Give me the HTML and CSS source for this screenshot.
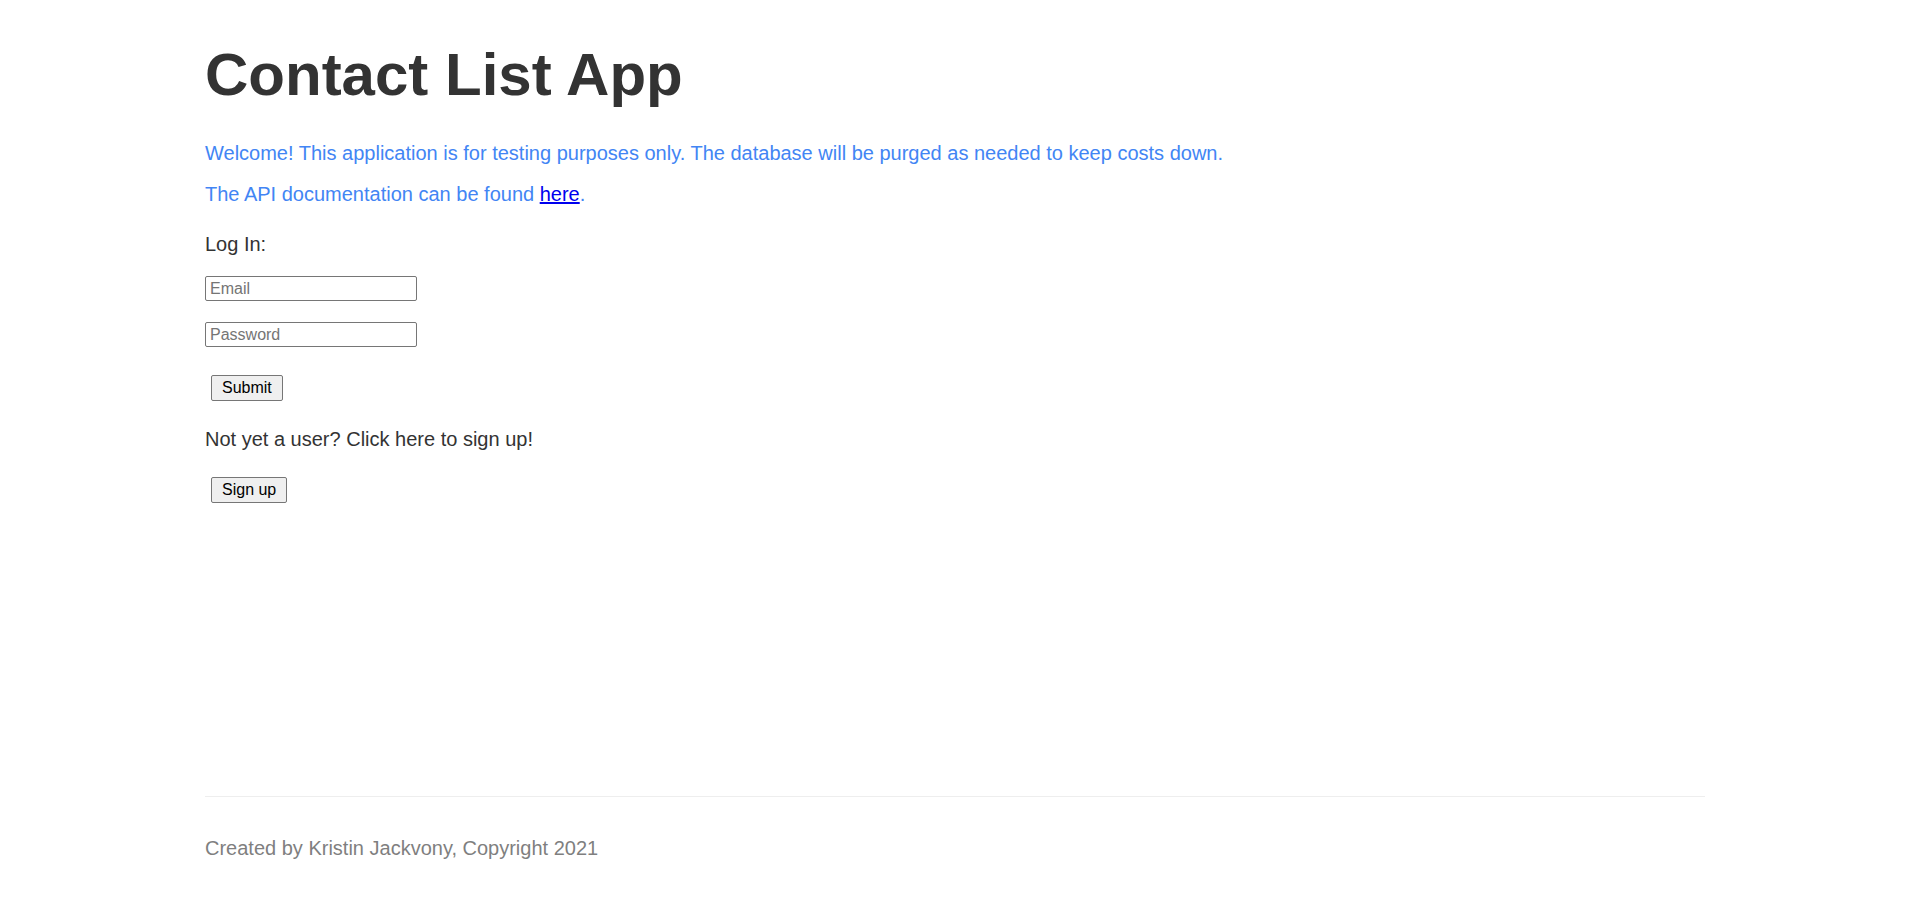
FILE: index.html
```html
<!DOCTYPE html>
<html lang="en">
<head>
<meta charset="utf-8">
<title>Contact List App</title>
<link rel="stylesheet" href="styles.css">
</head>
<body>
<div class="page">
  <main class="main">
    <h1 class="title">Contact List App</h1>
    <p class="intro">Welcome! This application is for testing purposes only. The database will be purged as needed to keep costs down.</p>
    <p class="intro">The API documentation can be found <a href="#" class="link">here</a>.</p>
    <p class="label">Log In:</p>
    <form class="login">
      <input class="field" type="text" placeholder="Email">
      <input class="field" type="password" placeholder="Password">
      <div class="btn-row"><button type="button" class="btn">Submit</button></div>
    </form>
    <p class="label">Not yet a user? Click here to sign up!</p>
    <div class="btn-row"><button type="button" class="btn">Sign up</button></div>
  </main>
  <footer class="footer">
    <p class="footer-text">Created by Kristin Jackvony, Copyright 2021</p>
  </footer>
</div>
</body>
</html>
```

FILE: styles.css
```css
html, body {
  margin: 0;
  padding: 0;
  background: #fff;
}
body {
  font-family: "Liberation Sans", Arial, sans-serif;
  color: #333;
}
.page {
  width: 1500px;
  margin: 0 auto;
  min-height: 100vh;
  display: flex;
  flex-direction: column;
}
.main {
  flex: 1;
  display: flex;
  flex-direction: column;
  align-items: flex-start;
}
.title {
  font-size: 60px;
  font-weight: bold;
  margin: 41px 0 0;
  line-height: 67px;
  color: #333;
}
.intro {
  font-size: 20px;
  line-height: 23px;
  color: #4285f4;
  margin: 0;
}
.title + .intro {
  margin-top: 34px;
}
.intro + .intro {
  margin-top: 18px;
}
.link {
  color: #0000ee;
  text-decoration: underline;
}
.label {
  font-size: 20px;
  line-height: 23px;
  color: #333;
  margin: 28px 0 0;
}
.intro + .label {
  margin-top: 27px;
}
.login {
  display: flex;
  flex-direction: column;
  align-items: flex-start;
  margin-top: 20px;
  gap: 21px;
}
.field {
  box-sizing: border-box;
  width: 212px;
  height: 25px;
  font-family: "Liberation Sans", Arial, sans-serif;
  font-size: 16px;
  padding: 1px 4px;
  border: 1px solid #767676;
  border-radius: 2px;
  margin: 0;
  color: #000;
  background: #fff;
}
.field::placeholder {
  color: #757575;
}
.login .btn-row {
  margin-top: 7px;
}
.btn-row {
  padding-left: 6px;
}
.label + .btn-row {
  margin-top: 26px;
}
.btn {
  box-sizing: border-box;
  height: 26px;
  font-family: "Liberation Sans", Arial, sans-serif;
  font-size: 16px;
  padding: 0 10px;
  border: 1px solid #767676;
  border-radius: 2px;
  background: #efefef;
  color: #000;
  margin: 0;
}
.login + .label {
  margin-top: 27px;
}
.footer {
  border-top: 1px solid #eee;
  margin-top: 0;
}
.footer-text {
  font-size: 20px;
  line-height: 23px;
  color: #7f7f7f;
  margin: 40px 0 63px;
}
```
